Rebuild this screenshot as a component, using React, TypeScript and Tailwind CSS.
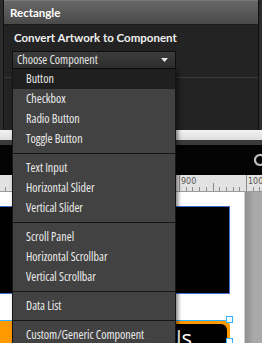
import { Fragment } from "react";

const groups: string[][] = [
  ["Button", "Checkbox", "Radio Button", "Toggle Button"],
  ["Text Input", "Horizontal Slider", "Vertical Slider"],
  ["Scroll Panel", "Horizontal Scrollbar", "Vertical Scrollbar"],
  ["Data List"],
  ["Custom/Generic Component"],
];

// Myriad-like narrow face: variable Open Sans squeezed on its width axis
const condensed = { fontFamily: "'Open Sans', sans-serif", fontStretch: "80%" };

function Ruler() {
  const ticks: number[] = [];
  for (let i = -27; i < 13; i++) ticks.push(i);
  return (
    <svg width="262" height="17" viewBox="0 0 262 17" className="block">
      <rect width="262" height="17" fill="#e2e2e2" />
      {ticks.map((i) => {
        const x = Math.round(179 + i * 6.7) + 0.5;
        const major = i % 10 === 0;
        const mid = !major && i % 5 === 0;
        return (
          <line
            key={i}
            x1={x}
            x2={x}
            y1={major ? 0 : mid ? 8 : 12}
            y2={17}
            stroke="#8a8a8a"
            strokeWidth="1"
          />
        );
      })}
      <text x="181" y="9" fontSize="8" fill="#555" fontFamily="DejaVu Sans, sans-serif">
        900
      </text>
      <text x="248" y="9" fontSize="8" fill="#555" fontFamily="DejaVu Sans, sans-serif">
        100
      </text>
      <line x1="0" x2="262" y1="16.5" y2="16.5" stroke="#9a9a9a" />
    </svg>
  );
}

function RefreshIcon() {
  return (
    <svg width="16" height="16" viewBox="0 0 16 16" fill="none">
      <path d="M13 8a5 5 0 1 1-1.6-3.7" stroke="#bdbdbd" strokeWidth="2.2" />
      <path d="M10 2.5 14 2.5 13.5 6.5Z" fill="#bdbdbd" />
    </svg>
  );
}

export default function App() {
  return (
    <div
      className="relative w-[262px] h-[343px] overflow-hidden bg-[#2c2c2c] flex flex-col"
      style={{ fontFamily: "Lato, 'Open Sans', sans-serif" }}
    >
      {/* properties panel */}
      <div className="mx-[3px] h-[130px] flex flex-col shrink-0 border-x border-[#111] relative z-20">
        <div className="h-[25px] shrink-0 bg-gradient-to-b from-[#676767] to-[#4a4a4a] border-t border-[#7a7a7a] border-b border-b-[#1a1a1a] flex items-center pl-[6px]">
          <span className="text-[11.5px] font-bold text-white leading-none">Rectangle</span>
        </div>
        <div className="flex-1 bg-[#232323] flex flex-col">
          <div className="pl-[10px] pt-[6px] h-[53px] border-b border-[#3a3a3a]">
            <div className="text-[11.5px] font-bold text-[#f0f0f0] leading-[14px]">
              Convert Artwork to Component
            </div>
            <div className="relative mt-[6px] ml-[-2px] w-[164px]">
              <div className="h-[18px] border border-[#0e0e0e] bg-gradient-to-b from-[#3c3c3c] to-[#2d2d2d] flex items-center justify-between pl-[4px] pr-[7px]">
                <span className="text-[12px] text-[#e6e6e6] leading-none" style={condensed}>
                  Choose Component
                </span>
                <svg width="7" height="4" viewBox="0 0 7 4">
                  <path d="M0 0H7L3.5 4Z" fill="#e8e8e8" />
                </svg>
              </div>
              {/* open dropdown list */}
              <div className="absolute left-0 top-full w-[164px] bg-[#424242] border-x border-[#151515] shadow-[2px_2px_4px_rgba(0,0,0,0.5)]">
                {groups.map((g, gi) => (
                  <Fragment key={gi}>
                    {gi > 0 && <div className="h-px bg-[#141414]" />}
                    <div className={gi === 0 ? "pb-[4px]" : "py-[4px]"}>
                      {g.map((item, ii) => (
                        <div
                          key={item}
                          style={condensed}
                          className={`h-[20px] flex items-center pl-[13px] text-[12px] text-[#ececec] ${
                            gi === 0 && ii === 0 ? "bg-[#1f1f1f]" : ""
                          }`}
                        >
                          {item}
                        </div>
                      ))}
                    </div>
                  </Fragment>
                ))}
              </div>
            </div>
          </div>
        </div>
      </div>

      {/* strip below panel */}
      <div className="h-[10px] shrink-0 bg-gradient-to-b from-[#f4f4f4] to-[#dcdcdc]" />
      <div className="h-[5px] shrink-0 bg-[#3a3a3a]" />
      <div className="h-[30px] shrink-0 bg-[#040404] flex justify-end items-start pt-[7px]">
        <div className="mr-[-6px]">
          <RefreshIcon />
        </div>
      </div>
      <Ruler />

      {/* canvas */}
      <div className="flex-1 flex">
        <div className="relative w-[244px] bg-white">
          <div className="absolute left-[-10px] top-[14px] w-[240px] h-[88px] bg-black border border-[#3d6fd1]" />
          <div className="absolute left-[-10px] top-[128px] w-[240px] h-[40px] bg-[#ff9a00] rounded-[6px] border-t border-t-[#2fb3ff]">
            <div className="absolute left-[180px] top-[3px] right-[3px] bottom-0 bg-black rounded-tr-[6px] flex items-start pl-[6px]">
              <span className="text-[22px] text-white leading-[26px]" style={{ fontFamily: "'Open Sans', sans-serif" }}>
                ls
              </span>
            </div>
          </div>
          <div className="absolute left-[226px] top-[124px] w-[7px] h-[7px] bg-white border border-[#2fb3ff]" />
          <div className="absolute left-[226px] top-[146px] w-[7px] h-[7px] bg-white border border-[#2fb3ff]" />
        </div>
        <div className="flex-1 bg-gradient-to-r from-[#8f8f8f] via-[#a9a9a9] to-[#a9a9a9] border-l border-[#d0d0d0]" />
      </div>
    </div>
  );
}
